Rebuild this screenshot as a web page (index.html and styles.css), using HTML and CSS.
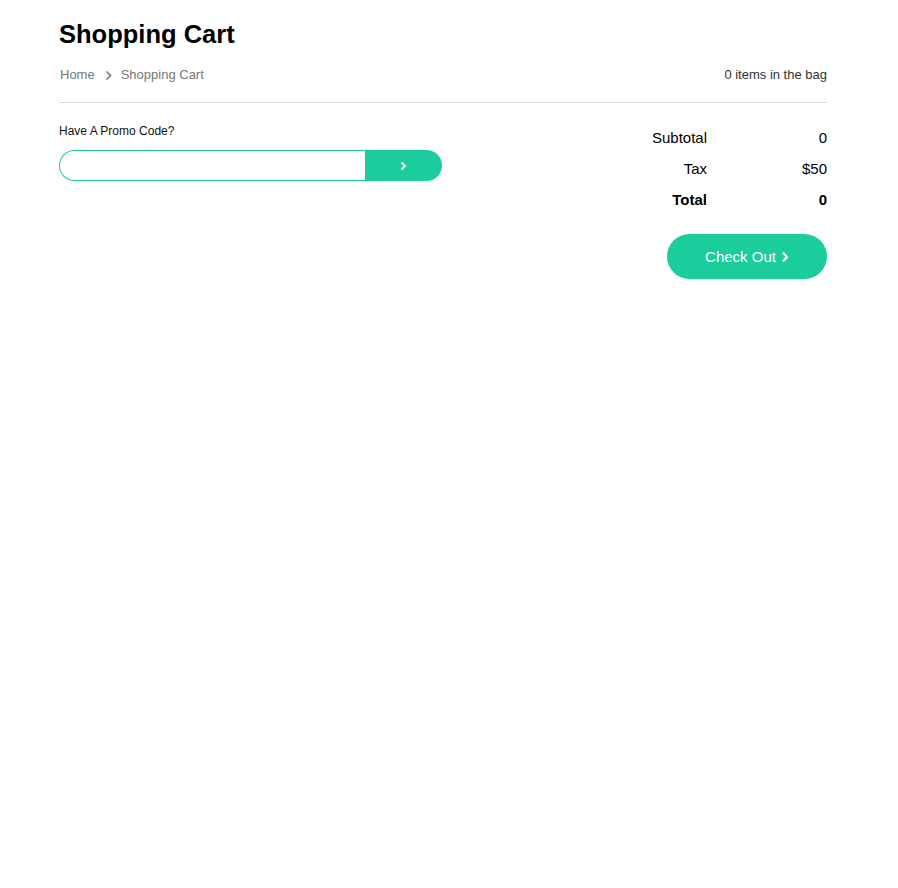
FILE: index.html
```html
<!DOCTYPE html>
<html>
<head>
<meta charset="utf-8">
<link rel="stylesheet" href="styles.css">
</head>
<body>
<div class="page">
  <h1 class="title">Shopping Cart</h1>
  <div class="crumbs">
    <nav class="crumb-nav">
      <span>Home</span>
      <svg class="crumb-sep" width="7" height="11" viewBox="0 0 7 11"><path d="M1.5 1.5 L5.5 5.5 L1.5 9.5" fill="none" stroke="#777" stroke-width="1.6"/></svg>
      <span>Shopping Cart</span>
    </nav>
    <span class="bag">0 items in the bag</span>
  </div>
  <div class="content">
    <div class="promo">
      <div class="promo-label">Have A Promo Code?</div>
      <div class="promo-field">
        <input class="promo-input" type="text">
        <button class="promo-btn"><svg width="7" height="10" viewBox="0 0 7 10"><path d="M1.5 1.5 L5 5 L1.5 8.5" fill="none" stroke="#fff" stroke-width="2"/></svg></button>
      </div>
    </div>
    <div class="summary">
      <div class="totals">
        <span class="lbl">Subtotal</span><span class="val">0</span>
        <span class="lbl">Tax</span><span class="val">$50</span>
        <span class="lbl strong">Total</span><span class="val strong">0</span>
      </div>
      <button class="checkout">Check Out <svg width="8" height="12" viewBox="0 0 8 12"><path d="M1.8 1.5 L6 6 L1.8 10.5" fill="none" stroke="#fff" stroke-width="2.2"/></svg></button>
    </div>
  </div>
</div>
</body>
</html>
```

FILE: styles.css
```css
html, body {
  margin: 0;
  padding: 0;
  background: #fff;
}
body {
  font-family: "Liberation Sans", Arial, sans-serif;
  color: #000;
}
.page {
  width: 768px;
  padding: 19px 0 0 59px;
}
.title {
  margin: 0;
  font-size: 25.5px;
  line-height: 30px;
  font-weight: bold;
}
.crumbs {
  margin-top: 18px;
  display: flex;
  justify-content: space-between;
  align-items: center;
  font-size: 13px;
  line-height: 16px;
  padding-bottom: 19px;
  border-bottom: 1px solid #ddd;
}
.crumb-nav {
  display: flex;
  align-items: center;
  color: #777;
  padding-left: 1px;
}
.crumb-sep {
  margin: 0 9px 0 10px;
}
.bag {
  color: #333;
}
.content {
  display: flex;
  justify-content: space-between;
  align-items: flex-start;
  padding-top: 19px;
}
.promo-label {
  font-size: 12px;
  line-height: 15px;
  color: #111;
  padding-top: 2px;
}
.promo-field {
  margin-top: 11px;
  display: flex;
  width: 383px;
  height: 31px;
}
.promo-input {
  flex: 1;
  min-width: 0;
  box-sizing: border-box;
  height: 31px;
  margin: 0;
  border: 1px solid #1bcc9c;
  border-right: none;
  border-radius: 16px 0 0 16px;
  outline: none;
  padding: 0 14px;
  font-family: inherit;
}
.promo-btn {
  width: 77px;
  height: 31px;
  margin: 0;
  border: none;
  background: #1bcc9c;
  border-radius: 0 16px 16px 0;
  display: flex;
  align-items: center;
  justify-content: center;
  padding: 0;
}
.summary {
  display: flex;
  flex-direction: column;
  align-items: flex-end;
}
.totals {
  display: grid;
  grid-template-columns: auto 120px;
  font-size: 15px;
  line-height: 31px;
}
.lbl, .val {
  text-align: right;
}
.strong {
  font-weight: bold;
}
.checkout {
  margin-top: 19px;
  width: 160px;
  height: 45px;
  border: none;
  border-radius: 23px;
  background: #1bcc9c;
  color: #fff;
  font-family: inherit;
  font-size: 15px;
  display: flex;
  align-items: center;
  justify-content: center;
  gap: 5px;
  padding: 0;
}
```
